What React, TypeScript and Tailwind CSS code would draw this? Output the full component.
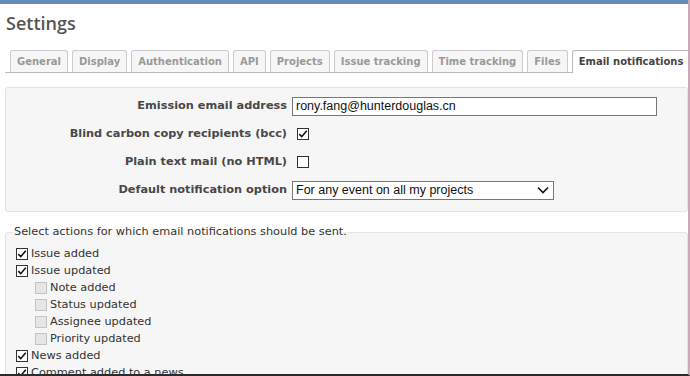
import { useState } from 'react';

const TABS = [
  'General',
  'Display',
  'Authentication',
  'API',
  'Projects',
  'Issue tracking',
  'Time tracking',
  'Files',
  'Email notifications',
];

const ACTIONS: { label: string; checked: boolean; sub?: boolean }[] = [
  { label: 'Issue added', checked: true },
  { label: 'Issue updated', checked: true },
  { label: 'Note added', checked: false, sub: true },
  { label: 'Status updated', checked: false, sub: true },
  { label: 'Assignee updated', checked: false, sub: true },
  { label: 'Priority updated', checked: false, sub: true },
  { label: 'News added', checked: true },
  { label: 'Comment added to a news', checked: true },
];

function Check({ checked, disabled }: { checked: boolean; disabled?: boolean }) {
  return (
    <span
      className={`inline-flex w-[12px] h-[12px] shrink-0 items-center justify-center border ${
        disabled ? 'border-[#c4c4c4] bg-[#e6e6e6]' : 'border-[#333] bg-white'
      }`}
    >
      {checked && (
        <svg viewBox="0 0 12 12" className="w-[10px] h-[10px]">
          <path d="M1.5 6.2 L4.5 9.2 L10.5 2" fill="none" stroke="#111" strokeWidth="1.9" />
        </svg>
      )}
    </span>
  );
}

export default function App() {
  const [email, setEmail] = useState('rony.fang@hunterdouglas.cn');
  const active = 'Email notifications';

  return (
    <div className="w-[690px] h-[376px] overflow-hidden bg-white border-r-[2px] border-r-[#c9a9b6] border-b-[2px] border-b-[#2b2b2b] font-['DejaVu_Sans',Verdana,sans-serif] text-[#484848]">
      <div className="h-[4px] bg-[#628db6]" />
      <div className="pl-[5px]">
        <h2 className="font-['Open_Sans',sans-serif] font-semibold text-[18px] leading-[24px] text-[#555] pt-[7px] pl-[1px]">
          Settings
        </h2>

        <ul className="flex items-end gap-[4px] border-b border-[#bbb] pl-[5px] mt-[15px] h-[23px] whitespace-nowrap">
          {TABS.map(t => (
            <li
              key={t}
              className={`shrink-0 border border-b-0 rounded-t-[3px] px-[6px] text-[10px] font-bold ${
                t === active
                  ? 'bg-white text-[#444] border-[#bbb] -mb-px h-[23px] leading-[22px]'
                  : 'bg-[#f6f6f6] text-[#999] border-[#ccc] h-[22px] leading-[21px]'
              }`}
            >
              {t}
            </li>
          ))}
        </ul>

        <div className="mt-[14px] bg-[#f6f6f6] border border-[#e4e4e4] rounded-[3px] pt-[8px] pb-[11px] text-[11.3px]">
          <div className="flex items-center h-[20px]">
            <label className="w-[286px] text-right font-bold pr-[5px]">Emission email address</label>
            <input
              value={email}
              onChange={e => setEmail(e.target.value)}
              className="w-[365px] h-[19px] border border-[#777] bg-white px-[3px] font-['Liberation_Sans',Arial,sans-serif] text-[12.5px] text-[#111] outline-none"
            />
          </div>
          <div className="flex items-center h-[20px] mt-[8px]">
            <label className="w-[286px] text-right font-bold pr-[5px]">Blind carbon copy recipients (bcc)</label>
            <span className="ml-[5px] flex">
              <Check checked />
            </span>
          </div>
          <div className="flex items-center h-[20px] mt-[8px]">
            <label className="w-[286px] text-right font-bold pr-[5px]">Plain text mail (no HTML)</label>
            <span className="ml-[5px] flex">
              <Check checked={false} />
            </span>
          </div>
          <div className="flex items-center h-[20px] mt-[8px]">
            <label className="w-[286px] text-right font-bold pr-[5px]">Default notification option</label>
            <div className="w-[262px] h-[19px] border border-[#777] bg-white flex items-center justify-between pl-[3px] pr-[4px] font-['Liberation_Sans',Arial,sans-serif] text-[12.5px] text-[#111]">
              <span>For any event on all my projects</span>
              <svg viewBox="0 0 12 8" className="w-[12px] h-[8px]">
                <path d="M1 1.5 L6 6.5 L11 1.5" fill="none" stroke="#111" strokeWidth="1.6" />
              </svg>
            </div>
          </div>
        </div>

        <fieldset className="mt-[12px] bg-[#f6f6f6] border border-[#e4e4e4] rounded-[3px] px-[10px] pb-[8px] text-[11.3px]">
          <legend className="px-[1px] -ml-[3px] text-[#333]">Select actions for which email notifications should be sent.</legend>
          <div className="mt-[5px]">
            {ACTIONS.map(a => (
              <div key={a.label} className={`flex items-center gap-[3px] h-[17px] ${a.sub ? 'pl-[19px]' : ''}`}>
                <Check checked={a.checked} disabled={a.sub} />
                <span className="text-[#333]">{a.label}</span>
              </div>
            ))}
          </div>
        </fieldset>
      </div>
    </div>
  );
}
